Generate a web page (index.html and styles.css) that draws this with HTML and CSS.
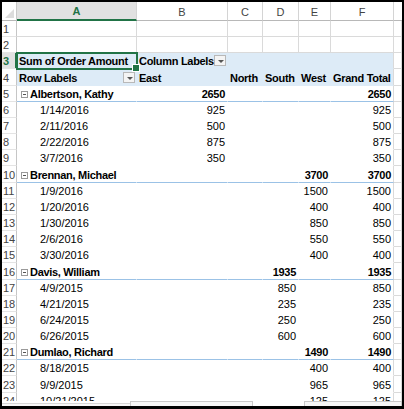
FILE: index.html
```html
<!DOCTYPE html>
<html>
<head>
<meta charset="utf-8">
<link rel="stylesheet" href="styles.css">
</head>
<body>
<div class="sheet">
  <div class="colhdr">
    <div class="h corner"><span class="tri"></span></div>
    <div class="h sel">A</div>
    <div class="h">B</div>
    <div class="h">C</div>
    <div class="h">D</div>
    <div class="h">E</div>
    <div class="h">F</div>
    <div class="h last"></div>
  </div>
  <div class="grid">
    <div class="row plain"><div class="c rn">1</div><div class="c"></div><div class="c"></div><div class="c"></div><div class="c"></div><div class="c"></div><div class="c"></div><div class="c g"></div></div>
    <div class="row plain"><div class="c rn">2</div><div class="c"></div><div class="c"></div><div class="c"></div><div class="c"></div><div class="c"></div><div class="c"></div><div class="c g"></div></div>
    <div class="row pv hd"><div class="c rn rsel">3</div><div class="c a b active">Sum of Order Amount</div><div class="c b">Column Labels<span class="dd"></span></div><div class="c"></div><div class="c"></div><div class="c"></div><div class="c"></div><div class="c g"></div></div>
    <div class="row pv hd"><div class="c rn">4</div><div class="c a b">Row Labels<span class="dd"></span></div><div class="c b">East</div><div class="c b">North</div><div class="c b">South</div><div class="c b">West</div><div class="c b">Grand Total</div><div class="c g"></div></div>

    <div class="row pv grp"><div class="c rn">5</div><div class="c a b"><span class="col"></span>Albertson, Kathy</div><div class="c n b">2650</div><div class="c"></div><div class="c"></div><div class="c"></div><div class="c n b">2650</div><div class="c g"></div></div>
    <div class="row pv"><div class="c rn">6</div><div class="c a d">1/14/2016</div><div class="c n">925</div><div class="c"></div><div class="c"></div><div class="c"></div><div class="c n">925</div><div class="c g"></div></div>
    <div class="row pv"><div class="c rn">7</div><div class="c a d">2/11/2016</div><div class="c n">500</div><div class="c"></div><div class="c"></div><div class="c"></div><div class="c n">500</div><div class="c g"></div></div>
    <div class="row pv"><div class="c rn">8</div><div class="c a d">2/22/2016</div><div class="c n">875</div><div class="c"></div><div class="c"></div><div class="c"></div><div class="c n">875</div><div class="c g"></div></div>
    <div class="row pv"><div class="c rn">9</div><div class="c a d">3/7/2016</div><div class="c n">350</div><div class="c"></div><div class="c"></div><div class="c"></div><div class="c n">350</div><div class="c g"></div></div>

    <div class="row pv grp"><div class="c rn">10</div><div class="c a b"><span class="col"></span>Brennan, Michael</div><div class="c"></div><div class="c"></div><div class="c"></div><div class="c n b">3700</div><div class="c n b">3700</div><div class="c g"></div></div>
    <div class="row pv"><div class="c rn">11</div><div class="c a d">1/9/2016</div><div class="c"></div><div class="c"></div><div class="c"></div><div class="c n">1500</div><div class="c n">1500</div><div class="c g"></div></div>
    <div class="row pv"><div class="c rn">12</div><div class="c a d">1/20/2016</div><div class="c"></div><div class="c"></div><div class="c"></div><div class="c n">400</div><div class="c n">400</div><div class="c g"></div></div>
    <div class="row pv"><div class="c rn">13</div><div class="c a d">1/30/2016</div><div class="c"></div><div class="c"></div><div class="c"></div><div class="c n">850</div><div class="c n">850</div><div class="c g"></div></div>
    <div class="row pv"><div class="c rn">14</div><div class="c a d">2/6/2016</div><div class="c"></div><div class="c"></div><div class="c"></div><div class="c n">550</div><div class="c n">550</div><div class="c g"></div></div>
    <div class="row pv"><div class="c rn">15</div><div class="c a d">3/30/2016</div><div class="c"></div><div class="c"></div><div class="c"></div><div class="c n">400</div><div class="c n">400</div><div class="c g"></div></div>

    <div class="row pv grp"><div class="c rn">16</div><div class="c a b"><span class="col"></span>Davis, William</div><div class="c"></div><div class="c"></div><div class="c n b">1935</div><div class="c"></div><div class="c n b">1935</div><div class="c g"></div></div>
    <div class="row pv"><div class="c rn">17</div><div class="c a d">4/9/2015</div><div class="c"></div><div class="c"></div><div class="c n">850</div><div class="c"></div><div class="c n">850</div><div class="c g"></div></div>
    <div class="row pv"><div class="c rn">18</div><div class="c a d">4/21/2015</div><div class="c"></div><div class="c"></div><div class="c n">235</div><div class="c"></div><div class="c n">235</div><div class="c g"></div></div>
    <div class="row pv"><div class="c rn">19</div><div class="c a d">6/24/2015</div><div class="c"></div><div class="c"></div><div class="c n">250</div><div class="c"></div><div class="c n">250</div><div class="c g"></div></div>
    <div class="row pv"><div class="c rn">20</div><div class="c a d">6/26/2015</div><div class="c"></div><div class="c"></div><div class="c n">600</div><div class="c"></div><div class="c n">600</div><div class="c g"></div></div>

    <div class="row pv grp"><div class="c rn">21</div><div class="c a b"><span class="col"></span>Dumlao, Richard</div><div class="c"></div><div class="c"></div><div class="c"></div><div class="c n b">1490</div><div class="c n b">1490</div><div class="c g"></div></div>
    <div class="row pv"><div class="c rn">22</div><div class="c a d">8/18/2015</div><div class="c"></div><div class="c"></div><div class="c"></div><div class="c n">400</div><div class="c n">400</div><div class="c g"></div></div>
    <div class="row pv"><div class="c rn">23</div><div class="c a d">9/9/2015</div><div class="c"></div><div class="c"></div><div class="c"></div><div class="c n">965</div><div class="c n">965</div><div class="c g"></div></div>
    <div class="row pv"><div class="c rn">24</div><div class="c a d">10/21/2015</div><div class="c"></div><div class="c"></div><div class="c"></div><div class="c n">125</div><div class="c n">125</div><div class="c g"></div></div>
  </div>
  <div class="bottom">
    <div class="seg s1"></div>
    <div class="seg box b1"></div>
    <div class="seg s2"></div>
    <div class="seg box b2"></div>
  </div>
</div>
</body>
</html>
```

FILE: styles.css
```css
* { box-sizing: border-box; margin: 0; padding: 0; }
html, body { width: 404px; height: 409px; overflow: hidden; background: #000; }
body {
  padding: 2px 2px 3px 2px;
  font-family: "Liberation Sans", Arial, sans-serif;
  font-size: 11px;
  color: #000;
}
.sheet {
  width: 400px;
  height: 404px;
  background: #fff;
  display: flex;
  flex-direction: column;
  overflow: hidden;
}
.colhdr, .row {
  display: grid;
  grid-template-columns: 15px 120px 91px 35px 36px 32px 63px 8px;
}
.colhdr { height: 19px; flex: none; }
.h {
  display: flex;
  align-items: center;
  justify-content: center;
  color: #444;
  font-size: 11px;
  line-height: 12px;
  padding-top: 1px;
  border-right: 1px solid #d4d4d4;
  border-bottom: 1px solid #b8b8b8;
  background: #fff;
}
.h.sel {
  background: #e1e1e1;
  color: #217346;
  font-weight: bold;
  border-bottom: 2px solid #217346;
}
.h.last { border-right: none; }
.corner { position: relative; border-right-color: #c8c8c8; }
.tri {
  position: absolute;
  right: 2px;
  bottom: 2px;
  width: 0;
  height: 0;
  border-left: 9px solid transparent;
  border-bottom: 9px solid #dcdcdc;
}
.grid { height: 380px; flex: none; overflow: hidden; }
.row { height: 16.17px; }
.c {
  display: flex;
  align-items: flex-end;
  line-height: 11px;
  padding: 0 2px 1px 2px;
  white-space: nowrap;
  border-right: 1px solid transparent;
  border-bottom: 1px solid transparent;
}
.c.rn {
  color: #444;
  padding-left: 1px;
  border-right-color: #c6c6c6;
  border-bottom-color: #e4e4e4;
  background: #fff;
}
.c.rsel {
  color: #217346;
  font-weight: bold;
  background: #e1e1e1;
  box-shadow: inset -1px 0 0 #217346;
  border-right-color: #217346;
}
.plain .c { border-right-color: #dadada; border-bottom-color: #dadada; }
.plain .c.rn { border-right-color: #c6c6c6; border-bottom-color: #e4e4e4; }
.pv .c:nth-child(7) { border-right-color: #dadada; }
.c.g { border-right-color: #dadada; border-bottom-color: #dadada; }
.hd .c:nth-child(n+2):nth-child(-n+7) { background: #ddebf7; }
.grp .c:nth-child(n+2):nth-child(-n+7) { border-bottom-color: #9bc2e6; }
.b { font-weight: bold; letter-spacing: -0.3px; }
.n { justify-content: flex-end; padding-right: 2px; }
.a { padding-left: 2px; }
.d { padding-left: 23px; }
.grp .a { padding-left: 4px; }
.col {
  width: 7px;
  height: 7px;
  border: 1px solid #9a9a9a;
  margin: 0 2px 2px 0;
  position: relative;
  flex: none;
}
.col::after {
  content: "";
  position: absolute;
  left: 1px;
  right: 1px;
  top: 2px;
  height: 1px;
  background: #555;
}
.dd {
  margin-left: auto;
  margin-right: -1px;
  margin-bottom: 1px;
  width: 12px;
  height: 11px;
  border: 1px solid #b8b8b8;
  background: #f4f4f4;
  position: relative;
  flex: none;
}
.dd::after {
  content: "";
  position: absolute;
  left: 3px;
  top: 4px;
  border-left: 3px solid transparent;
  border-right: 3px solid transparent;
  border-top: 3px solid #555;
}
.active {
  position: relative;
  outline: 2px solid #217346;
  outline-offset: -1px;
  z-index: 2;
}
.active::after {
  content: "";
  position: absolute;
  right: -4px;
  bottom: -4px;
  width: 6px;
  height: 6px;
  background: #217346;
  border: 1px solid #fff;
}
.bottom { height: 5px; flex: none; display: flex; }
.seg { height: 5px; }
.s1 { width: 128px; margin-top: 2px; border-top: 1px solid #d8d8d8; background: #f7f7f7; }
.box { border: 1px solid #c8c8c8; border-bottom: none; background: #f6f6f6; }
.b1 { width: 123px; }
.s2 { width: 51px; background: #fff; }
.b2 { flex: 1; }
```
